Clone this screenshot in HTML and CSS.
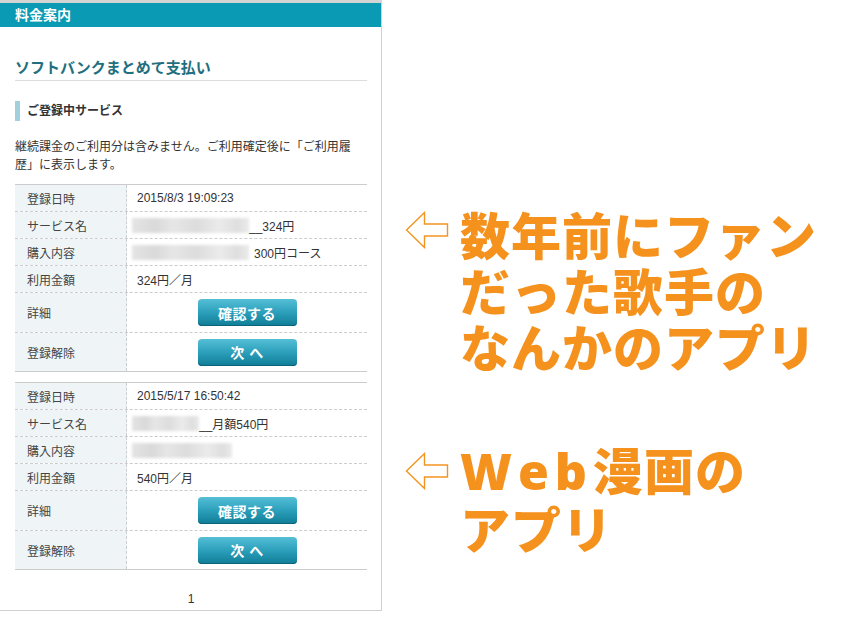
FILE: index.html
```html
<!DOCTYPE html>
<html lang="ja">
<head>
<meta charset="utf-8">
<title>料金案内</title>
<link rel="stylesheet" href="styles.css">
</head>
<body>
<div class="page">
  <section class="panel">
    <div class="panel-head">料金案内</div>
    <div class="panel-body">
      <h1 class="title">ソフトバンクまとめて支払い</h1>
      <h2 class="sub">ご登録中サービス</h2>
      <p class="note">継続課金のご利用分は含みません。ご利用確定後に「ご利用履歴」に表示します。</p>

      <div class="svc">
        <div class="row"><div class="k">登録日時</div><div class="v">2015/8/3 19:09:23</div></div>
        <div class="row"><div class="k">サービス名</div><div class="v"><span class="blur w117"></span>__324円</div></div>
        <div class="row"><div class="k">購入内容</div><div class="v"><span class="blur w117"></span><span class="gap">300円コース</span></div></div>
        <div class="row"><div class="k">利用金額</div><div class="v">324円／月</div></div>
        <div class="row tall"><div class="k">詳細</div><div class="v center"><span class="btn">確認する</span></div></div>
        <div class="row tall2"><div class="k">登録解除</div><div class="v center"><span class="btn">次 へ</span></div></div>
      </div>

      <div class="svc">
        <div class="row"><div class="k">登録日時</div><div class="v">2015/5/17 16:50:42</div></div>
        <div class="row"><div class="k">サービス名</div><div class="v"><span class="blur w67"></span>__月額540円</div></div>
        <div class="row"><div class="k">購入内容</div><div class="v"><span class="blur w100"></span></div></div>
        <div class="row"><div class="k">利用金額</div><div class="v">540円／月</div></div>
        <div class="row tall"><div class="k">詳細</div><div class="v center"><span class="btn">確認する</span></div></div>
        <div class="row tall2"><div class="k">登録解除</div><div class="v center"><span class="btn">次 へ</span></div></div>
      </div>

      <div class="pager">1</div>
    </div>
  </section>

  <aside class="notes">
    <div class="callout c1">
      <svg class="arrow" viewBox="0 0 44 38" width="44" height="38"><polygon points="1.5,19 19.5,1.5 19.5,13 42.5,13 42.5,25 19.5,25 19.5,36.5" fill="none" stroke="#f39420" stroke-width="1.4" stroke-linejoin="miter"/></svg>
      <div class="big">数年前にファン<br>だった歌手の<br>なんかのアプリ</div>
    </div>
    <div class="callout c2">
      <svg class="arrow" viewBox="0 0 44 38" width="44" height="38"><polygon points="1.5,19 19.5,1.5 19.5,13 42.5,13 42.5,25 19.5,25 19.5,36.5" fill="none" stroke="#f39420" stroke-width="1.4" stroke-linejoin="miter"/></svg>
      <div class="big"><span class="latin">Web</span>漫画の<br>アプリ</div>
    </div>
  </aside>
</div>
</body>
</html>
```

FILE: styles.css
```css
html, body {
  margin: 0;
  padding: 0;
  background: #ffffff;
}
body {
  font-family: "Liberation Sans", "Noto Sans CJK JP", sans-serif;
  color: #333333;
}
.page {
  width: 850px;
  height: 620px;
  display: flex;
  align-items: flex-start;
}
.panel {
  width: 381px;
  height: 607px;
  border-top: 3px solid #d4d4d4;
  border-right: 1px solid #d0d0d0;
  border-bottom: 1px solid #d0d0d0;
  box-sizing: content-box;
  display: flex;
  flex-direction: column;
}
.panel-head {
  height: 24px;
  line-height: 24px;
  background: #0b9ab4;
  color: #ffffff;
  font-size: 14px;
  font-weight: bold;
  padding-left: 15px;
}
.panel-body {
  padding: 31px 14px 0 15px;
}
.title {
  margin: 0;
  font-size: 15px;
  line-height: 20px;
  font-weight: bold;
  color: #1f6f80;
  padding-bottom: 2px;
  border-bottom: 1px solid #dddddd;
}
.sub {
  margin: 20px 0 0 0;
  height: 20px;
  line-height: 20px;
  font-size: 12px;
  font-weight: bold;
  color: #333333;
  border-left: 5px solid #9fd0dc;
  padding-left: 7px;
}
.note {
  margin: 17px 0 0 0;
  font-size: 12px;
  line-height: 18px;
  color: #333333;
}
.svc {
  margin-top: 10px;
  border-top: 1px solid #cccccc;
  border-bottom: 1px solid #cccccc;
  font-size: 12px;
}
.row {
  display: grid;
  grid-template-columns: 112px 1fr;
  height: 27px;
  border-top: 1px dashed #cccccc;
  box-sizing: border-box;
}
.row:first-child {
  border-top: none;
  height: 26px;
}
.row.tall { height: 40px; }
.row.tall2 { height: 39px; }
.k {
  background: #eff5f6;
  border-right: 1px dashed #cccccc;
  display: flex;
  align-items: center;
  padding-left: 12px;
  color: #444444;
}
.v {
  display: flex;
  align-items: center;
  padding-left: 10px;
  color: #333333;
}
.v.center {
  justify-content: center;
  padding-left: 0;
}
.blur {
  display: inline-block;
  height: 15px;
  margin-left: -5px;
  background: linear-gradient(90deg, #e4e4e4 0%, #d9d9d9 20%, #e6e6e6 35%, #dcdcdc 55%, #ebebeb 75%, #dedede 90%, #eaeaea 100%);
  filter: blur(1.5px);
}
.w117 { width: 117px; }
.w67 { width: 67px; }
.w100 { width: 100px; }
.gap { margin-left: 5px; }
.btn {
  display: inline-flex;
  align-items: center;
  justify-content: center;
  width: 99px;
  height: 27px;
  border-radius: 4px;
  background: linear-gradient(180deg, #55bfd6 0%, #2c9fbb 50%, #0f7c96 100%);
  box-shadow: inset 0 -1px 0 #0b6379;
  color: #ffffff;
  font-size: 14px;
  font-weight: bold;
  letter-spacing: 0.5px;
}
.pager {
  margin-top: 20px;
  text-align: center;
  font-size: 12px;
  line-height: 18px;
  color: #333333;
  padding-right: 0;
}
.notes {
  display: flex;
  flex-direction: column;
  padding-left: 23px;
  padding-top: 205px;
}
.callout {
  display: flex;
  align-items: flex-start;
}
.c2 {
  margin-top: 67px;
}
.arrow {
  display: block;
  margin-top: 6px;
  margin-right: 11px;
  flex: none;
}
.c2 .arrow { margin-top: 12px; }
.big {
  font-family: "Noto Sans CJK JP", sans-serif;
  font-weight: 900;
  font-size: 50px;
  line-height: 56px;
  letter-spacing: 1px;
  color: #f5921e;
}
.latin {
  font-family: "Open Sans", "Noto Sans", sans-serif;
  font-weight: 800;
  letter-spacing: 6px;
}
```
